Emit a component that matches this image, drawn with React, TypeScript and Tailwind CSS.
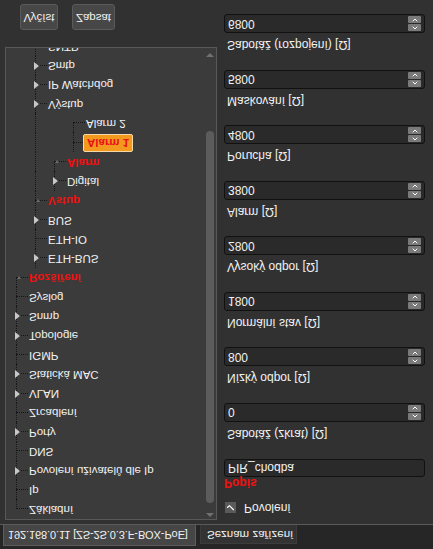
import { ChevronDown, ChevronUp, Check } from 'lucide-react'

// Konfigurace vstupu — celé okno je v referenci převrácené svisle,
// proto je kořen otočený přes -scale-y-100.

type Row = {
  label: string
  depth: number
  guides: boolean[] // pokračující svislé čáry předků
  last?: boolean
  first?: boolean
  arrow?: 'closed' | 'open'
  red?: boolean
  selected?: boolean
}

const rows: Row[] = [
  { label: 'Základní', depth: 0, guides: [], first: true },
  { label: 'Ip', depth: 0, guides: [] },
  { label: 'Povolení uživatelů dle Ip', depth: 0, guides: [], arrow: 'closed' },
  { label: 'DNS', depth: 0, guides: [] },
  { label: 'Porty', depth: 0, guides: [], arrow: 'closed' },
  { label: 'Zrcadlení', depth: 0, guides: [] },
  { label: 'VLAN', depth: 0, guides: [], arrow: 'closed' },
  { label: 'Statická MAC', depth: 0, guides: [], arrow: 'closed' },
  { label: 'IGMP', depth: 0, guides: [] },
  { label: 'Topologie', depth: 0, guides: [], arrow: 'closed' },
  { label: 'Snmp', depth: 0, guides: [], arrow: 'closed' },
  { label: 'Syslog', depth: 0, guides: [] },
  { label: 'Rozšíření', depth: 0, guides: [], last: true, arrow: 'open', red: true },
  { label: 'ETH-BUS', depth: 1, guides: [false], first: true, arrow: 'closed' },
  { label: 'ETH-IO', depth: 1, guides: [false] },
  { label: 'BUS', depth: 1, guides: [false], arrow: 'closed' },
  { label: 'Vstup', depth: 1, guides: [false], arrow: 'open', red: true },
  { label: 'Digital', depth: 2, guides: [false, true], first: true, arrow: 'closed' },
  { label: 'Alarm', depth: 2, guides: [false, true], last: true, arrow: 'open', red: true },
  { label: 'Alarm 1', depth: 3, guides: [false, true, false], first: true, selected: true },
  { label: 'Alarm 2', depth: 3, guides: [false, true, false], last: true },
  { label: 'Výstup', depth: 1, guides: [false], arrow: 'closed' },
  { label: 'IP Watchdog', depth: 1, guides: [false], arrow: 'closed' },
  { label: 'Smtp', depth: 1, guides: [false], arrow: 'closed' },
  { label: 'SNTP', depth: 1, guides: [false] },
]

const lineX = (d: number) => 10 + d * 19

const spins = [
  { label: 'Sabotáž (zkrat) [Ω]', value: '0' },
  { label: 'Nízký odpor [Ω]', value: '800' },
  { label: 'Normální stav [Ω]', value: '1800' },
  { label: 'Vysoký odpor [Ω]', value: '2800' },
  { label: 'Alarm [Ω]', value: '3800' },
  { label: 'Porucha [Ω]', value: '4800' },
  { label: 'Maskování [Ω]', value: '5800' },
  { label: 'Sabotáž (rozpojení) [Ω]', value: '6800' },
]

function TreeRow({ row }: { row: Row }) {
  const x = lineX(row.depth)
  return (
    <div className="relative h-[19.3px]">
      {row.guides.map((g, i) =>
        g ? (
          <div key={i} className="absolute top-0 bottom-0 border-l border-dotted border-[#161616]" style={{ left: lineX(i) }} />
        ) : null,
      )}
      {/* svislá čára aktuální úrovně */}
      <div
        className="absolute border-l border-dotted border-[#161616]"
        style={{ left: x, top: row.first && row.depth === 0 ? '50%' : 0, bottom: row.last ? '50%' : 0 }}
      />
      <div className="absolute top-1/2 w-[12px] border-t border-dotted border-[#161616]" style={{ left: x }} />
      {row.arrow === 'closed' && (
        <div
          className="absolute top-1/2 -mt-[4px] h-0 w-0 border-y-[4px] border-l-[5px] border-y-transparent border-l-[#c8c8c8]"
          style={{ left: x - 1 }}
        />
      )}
      {row.arrow === 'open' && (
        <div
          className="absolute top-1/2 -mt-[1px] h-0 w-0 border-x-[2px] border-t-[3px] border-x-transparent border-t-[#6b6b6b]"
          style={{ left: x + 1 }}
        />
      )}
      <div className="absolute top-0 bottom-0 flex items-center whitespace-nowrap" style={{ left: x + 13 }}>
        {row.selected ? (
          <span className="-ml-[3px] rounded-[2px] border border-[#f6d9a8] bg-[#f39a1e] px-[3px] leading-[16px] font-bold text-[#e8121a]">
            {row.label}
          </span>
        ) : (
          <span className={row.red ? 'font-bold text-[#ee1111]' : 'text-[#f2f2f2]'}>{row.label}</span>
        )}
      </div>
    </div>
  )
}

function SpinInput({ value }: { value: string }) {
  return (
    <div className="flex h-[19px] items-center rounded-[3px] border border-[#111] bg-[#2a2a2a] pl-[3px] pr-[3px] text-[#f2f2f2]">
      <span className="flex-1">{value}</span>
      <div className="flex flex-col gap-[1px]">
        <div className="flex h-[7px] w-[13px] items-center justify-center rounded-[1px] bg-[#7a7a7a]">
          <ChevronUp size={8} strokeWidth={3} className="text-white" />
        </div>
        <div className="flex h-[7px] w-[13px] items-center justify-center rounded-[1px] bg-[#7a7a7a]">
          <ChevronDown size={8} strokeWidth={3} className="text-white" />
        </div>
      </div>
    </div>
  )
}

export default function App() {
  return (
    <div
      className="h-[549px] w-[433px] -scale-y-100 overflow-hidden bg-[#313131] text-[12px] text-[#f2f2f2]"
      style={{ fontFamily: '"Liberation Sans", Arial, sans-serif' }}
    >
      {/* záložky */}
      <div className="flex h-[25px] items-end gap-[4px] border-b border-[#5a5a5a] bg-[#262626] pl-[3px]">
        <div className="flex h-[21px] w-[193px] items-center whitespace-nowrap border border-b-0 border-[#5c5c5c] bg-[#464646] pl-[4px] text-[11px] tracking-[-0.1px]">
          192.168.0.11 [ZS-2S.0.3.F-BOX-PoE]
        </div>
        <div className="flex h-[19px] w-[97px] items-center whitespace-nowrap border border-b-0 border-[#3c3c3c] bg-[#333] pl-[6px] text-[11.5px]">
          Seznam zařízení
        </div>
      </div>

      <div className="flex">
        {/* levý panel se stromem */}
        <div className="w-[217px] pl-[5px]">
          <div className="mt-[4px] flex h-[473px] border border-[#585858] bg-[#3b3b3b] text-[11.5px]">
            <div className="relative flex-1 overflow-hidden">
              {rows.map((r) => (
                <TreeRow key={r.label} row={r} />
              ))}
            </div>
            <div className="flex w-[13px] flex-col items-center py-[2px]">
              <div className="h-0 w-0 border-x-[4px] border-b-[4px] border-x-transparent border-b-[#707070]" />
              <div className="mt-[10px] h-[372px] w-[8px] rounded-[4px] bg-[#5c5c5c]" />
              <div className="flex-1" />
              <div className="mb-[3px] h-0 w-0 border-x-[4px] border-t-[4px] border-x-transparent border-t-[#707070]" />
            </div>
          </div>
          <div className="mt-[17px] flex gap-[14px] pl-[15px]">
            <button className="h-[26px] w-[38px] rounded-[3px] border border-[#5a5a5a] bg-[#474747] text-[11.5px] text-[#f2f2f2]">
              Vyčíst
            </button>
            <button className="h-[26px] w-[43px] rounded-[3px] border border-[#5a5a5a] bg-[#474747] text-[11.5px] text-[#f2f2f2]">
              Zapsat
            </button>
          </div>
        </div>

        {/* pravý panel */}
        <div className="ml-[7px] w-[201px]">
          <div className="mt-[10px] flex h-[12px] items-center gap-[8px] pl-[1px]">
            <div className="flex h-[11px] w-[11px] items-center justify-center bg-[#5a5a5a]">
              <Check size={9} strokeWidth={3} className="text-white" />
            </div>
            <span>Povolení</span>
          </div>
          <div className="mt-[13px] flex h-[12px] items-center font-bold text-[#ee1111]">Popis</div>
          <div className="flex h-[18px] items-center rounded-[3px] border border-[#111] bg-[#2a2a2a] pl-[3px]">
            PIR_chodba
          </div>
          <div className="mt-[17px] flex flex-col gap-[16.5px]">
            {spins.map((s) => (
              <div key={s.label}>
                <div className="flex h-[16px] items-center pl-[3px]">{s.label}</div>
                <div className="mt-[4px]">
                  <SpinInput value={s.value} />
                </div>
              </div>
            ))}
          </div>
        </div>
      </div>
    </div>
  )
}
